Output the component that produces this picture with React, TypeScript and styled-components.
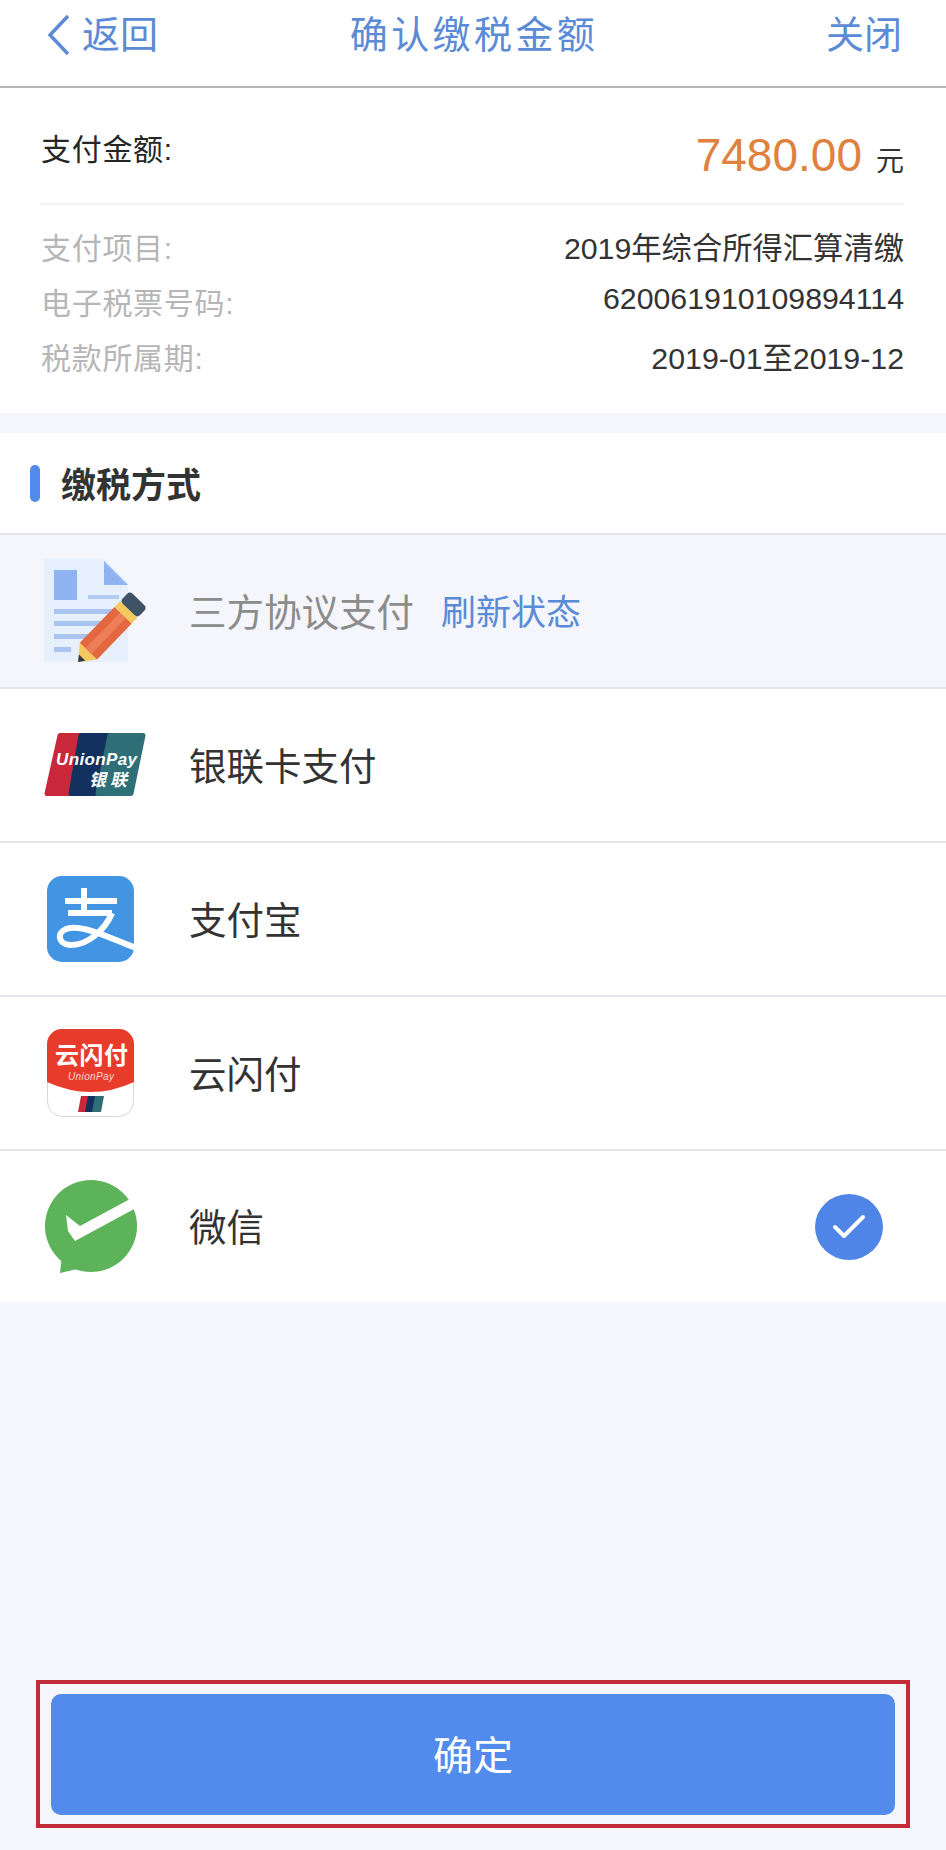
import React from "react";
import styled, { createGlobalStyle } from "styled-components";

const GlobalStyle = createGlobalStyle`
  html, body {
    margin: 0;
    padding: 0;
    background: #f4f6fb;
    font-family: "Liberation Sans", "Noto Sans CJK SC", sans-serif;
  }
  * {
    box-sizing: border-box;
  }
`;

function DocIcon() {
  return (
    <svg width="104" height="106" viewBox="0 0 104 106">
      <path d="M3 1H60L84 25V101a3 3 0 0 1-3 3H3a3 3 0 0 1-3-3V4a3 3 0 0 1 3-3Z" fill="#e6effc" />
      <path d="M60 3L84 27H60Z" fill="#8fb3f0" />
      <rect x="10" y="12" width="23" height="30" fill="#8fb3f0" />
      <rect x="44" y="37" width="31" height="4" fill="#b3cbf3" />
      <rect x="10" y="51" width="60" height="5" fill="#a9c4f0" />
      <rect x="10" y="63" width="50" height="5" fill="#a9c4f0" />
      <rect x="10" y="76" width="36" height="5" fill="#a9c4f0" />
      <rect x="10" y="89" width="17" height="5" fill="#a9c4f0" />
      <g transform="translate(34 104) rotate(-46)">
        <path d="M0 0L15 -12V12Z" fill="#f4c95d" />
        <path d="M0 0L6 -4.5V4.5Z" fill="#34383f" />
        <rect x="15" y="-12" width="50" height="24" fill="#e4683f" />
        <rect x="15" y="-4" width="50" height="8" fill="#ec7f58" />
        <rect x="65" y="-12" width="8" height="24" fill="#f4c95d" />
        <rect x="73" y="-12" width="14" height="24" rx="4" fill="#3f5266" />
      </g>
    </svg>
  );
}

function UnionPayIcon() {
  return (
    <svg width="102" height="102" viewBox="0 0 102 102">
      <g strokeWidth="5" strokeLinejoin="round">
        <path d="M16 21.5H42L31 79.5H3Z" fill="#c8283a" stroke="#c8283a" />
        <path d="M37 21.5H68L56 79.5H27Z" fill="#13315f" stroke="#13315f" />
        <path d="M66 21.5H99L87 79.5H54Z" fill="#2f6f78" stroke="#2f6f78" />
      </g>
      <UnionPayText x="12" y="51" textLength="81" fontSize="17">
        UnionPay
      </UnionPayText>
      <UnionPayText x="45" y="72" textLength="38" fontSize="17">
        银联
      </UnionPayText>
    </svg>
  );
}

function AlipayIcon() {
  return (
    <svg width="102" height="102" viewBox="0 0 102 102">
      <clipPath id="alipay-clip">
        <rect x="3" y="8" width="87" height="86" rx="15" />
      </clipPath>
      <rect x="3" y="8" width="87" height="86" rx="15" fill="#4295e2" />
      <g clipPath="url(#alipay-clip)" fill="none" stroke="#fff" strokeWidth="6">
        <path d="M21 33H73M40 20V44M24 45H68" />
        <path d="M68 45C61 62 43 78 26 77C13 76 12 62 26 60C44 58 70 72 92 80" />
      </g>
    </svg>
  );
}

function YunIcon() {
  return (
    <svg width="102" height="102" viewBox="0 0 102 102">
      <rect x="3.5" y="7.5" width="86" height="87" rx="15" fill="#fff" stroke="#d8d8d8" />
      <path d="M3 60V22A15 15 0 0 1 18 7H75A15 15 0 0 1 90 22V60Q47 80 3 60Z" fill="#e73c2c" />
      <YunTitle x="11" y="42" textLength="73" fontSize="24">
        云闪付
      </YunTitle>
      <YunSub x="24" y="58" textLength="46" fontSize="10">
        UnionPay
      </YunSub>
      <path d="M37 74H45L42 90H34Z" fill="#c8283a" />
      <path d="M44 74H52L49 90H41Z" fill="#13315f" />
      <path d="M51 74H60L57 90H48Z" fill="#2f6f78" />
    </svg>
  );
}

function WeChatIcon() {
  return (
    <svg width="102" height="102" viewBox="0 0 102 102">
      <circle cx="47" cy="50" r="46" fill="#5cb35a" />
      <path d="M18 80L16 97L42 91Z" fill="#5cb35a" />
      <path d="M22 39L36 50L86 23L92 32L31 65L24 55Z" fill="#fff" />
    </svg>
  );
}

const methods = [
  { name: "三方协议支付", icon: <DocIcon />, disabled: true },
  { name: "银联卡支付", icon: <UnionPayIcon /> },
  { name: "支付宝", icon: <AlipayIcon /> },
  { name: "云闪付", icon: <YunIcon /> },
  { name: "微信", icon: <WeChatIcon />, checked: true },
];

const details = [
  { label: "支付项目:", value: "2019年综合所得汇算清缴" },
  { label: "电子税票号码:", value: "620061910109894114", raised: true },
  { label: "税款所属期:", value: "2019-01至2019-12" },
];

export default function App() {
  return (
    <Page>
      <GlobalStyle />
      <Header>
        <Back>
          <svg width="26" height="42" viewBox="0 0 26 42">
            <path d="M22 2L4 21L22 40" fill="none" stroke="#5b8bd6" strokeWidth="3.5" />
          </svg>
          返回
        </Back>
        <Title>确认缴税金额</Title>
        <Close>关闭</Close>
      </Header>

      <Summary>
        <AmountRow>
          <AmountLabel>支付金额:</AmountLabel>
          <Amount>
            7480.00<Unit>元</Unit>
          </Amount>
        </AmountRow>
        <Details>
          {details.map((d) => (
            <DetailRow key={d.label}>
              <DetailLabel>{d.label}</DetailLabel>
              <DetailValue $raised={d.raised}>{d.value}</DetailValue>
            </DetailRow>
          ))}
        </Details>
      </Summary>

      <SectionHead>
        <SectionBar />
        <SectionTitle>缴税方式</SectionTitle>
      </SectionHead>

      <MethodList>
        {methods.map((m) => (
          <MethodRow key={m.name} $disabled={m.disabled}>
            <IconSlot>{m.icon}</IconSlot>
            <MethodName $disabled={m.disabled}>{m.name}</MethodName>
            {m.disabled && <Refresh>刷新状态</Refresh>}
            {m.checked && (
              <CheckMark>
                <svg width="36" height="30" viewBox="0 0 36 30">
                  <path
                    d="M4 15L13 24L32 5"
                    fill="none"
                    stroke="#fff"
                    strokeWidth="4"
                    strokeLinecap="round"
                    strokeLinejoin="round"
                  />
                </svg>
              </CheckMark>
            )}
          </MethodRow>
        ))}
      </MethodList>

      <Footer>
        <Highlight>
          <ConfirmButton>确定</ConfirmButton>
        </Highlight>
      </Footer>
    </Page>
  );
}

const Page = styled.div`
  display: flex;
  flex-direction: column;
  width: 946px;
  height: 1850px;
  background: #f4f6fb;
  overflow: hidden;
`;

const Header = styled.div`
  display: grid;
  grid-template-columns: 1fr auto 1fr;
  height: 88px;
  padding: 3px 44px 0 46px;
  background: #fff;
  border-bottom: 2px solid #b4b4b4;
  color: #5b8bd6;
  font-size: 38px;
  line-height: 64px;
`;

const Back = styled.div`
  display: flex;
  align-items: center;
  height: 64px;
  gap: 10px;
`;

const Title = styled.div`
  letter-spacing: 3.4px;
`;

const Close = styled.div`
  text-align: right;
`;

const Summary = styled.div`
  height: 325px;
  padding: 0 42px 0 41px;
  background: #fff;
`;

const AmountRow = styled.div`
  display: flex;
  justify-content: space-between;
  height: 117px;
  padding-top: 38px;
  border-bottom: 2px solid #f3f3f3;
`;

const AmountLabel = styled.div`
  font-size: 30px;
  line-height: 48px;
  letter-spacing: 0.7px;
  color: #262626;
`;

const Amount = styled.div`
  font-size: 46px;
  line-height: 58px;
  color: #e0813e;
`;

const Unit = styled.span`
  margin-left: 14px;
  font-size: 28px;
  color: #333;
`;

const Details = styled.div`
  padding-top: 16px;
`;

const DetailRow = styled.div`
  display: flex;
  justify-content: space-between;
  height: 55px;
  font-size: 30px;
  line-height: 55px;
`;

const DetailLabel = styled.div`
  letter-spacing: 0.7px;
  color: #b6b6b6;
`;

const DetailValue = styled.div<{ $raised?: boolean }>`
  font-size: 30.3px;
  margin-top: ${({ $raised }) => ($raised ? "-5px" : "0")};
  color: #333;
`;

const SectionHead = styled.div`
  display: flex;
  align-items: center;
  gap: 21px;
  height: 102px;
  margin-top: 20px;
  padding-left: 30px;
  background: #fff;
  border-bottom: 2px solid #e4e5e8;
`;

const SectionBar = styled.div`
  width: 10px;
  height: 37px;
  border-radius: 5px;
  background: #528bec;
`;

const SectionTitle = styled.div`
  padding-bottom: 2px;
  font-size: 35px;
  font-weight: 700;
  color: #333;
`;

const MethodList = styled.div`
  display: flex;
  flex-direction: column;
`;

const MethodRow = styled.div<{ $disabled?: boolean }>`
  display: flex;
  align-items: center;
  height: 154px;
  background: ${({ $disabled }) => ($disabled ? "#f4f6fb" : "#fff")};
  border-bottom: 2px solid #e4e5e8;

  &:last-child {
    height: 151px;
    border-bottom: 0;
  }
`;

const IconSlot = styled.div`
  display: flex;
  align-items: center;
  width: 189px;
  padding-left: 44px;
  flex-shrink: 0;
`;

const MethodName = styled.div<{ $disabled?: boolean }>`
  padding-bottom: 4px;
  font-size: 37.5px;
  color: ${({ $disabled }) => ($disabled ? "#8c8c8c" : "#333")};
`;

const Refresh = styled.div`
  margin-left: 27px;
  padding-bottom: 4px;
  font-size: 35px;
  color: #5b8bd6;
`;

const CheckMark = styled.div`
  display: flex;
  align-items: center;
  justify-content: center;
  width: 68px;
  height: 66px;
  margin-left: auto;
  margin-right: 63px;
  border-radius: 50%;
  background: #4f85e6;
`;

const Footer = styled.div`
  margin-top: auto;
  padding: 0 36px 22px;
`;

const Highlight = styled.div`
  padding: 10px 11px 9px;
  border: 4px solid #c42b38;
`;

const ConfirmButton = styled.div`
  height: 121px;
  padding-top: 2px;
  border-radius: 10px;
  background: #528bec;
  color: #fff;
  font-size: 40px;
  line-height: 121px;
  text-align: center;
`;

const UnionPayText = styled.text`
  fill: #fff;
  font-style: italic;
  font-weight: 700;
`;

const YunTitle = styled.text`
  fill: #fff;
  font-weight: 700;
`;

const YunSub = styled.text`
  fill: #fbd5cf;
  font-style: italic;
`;
